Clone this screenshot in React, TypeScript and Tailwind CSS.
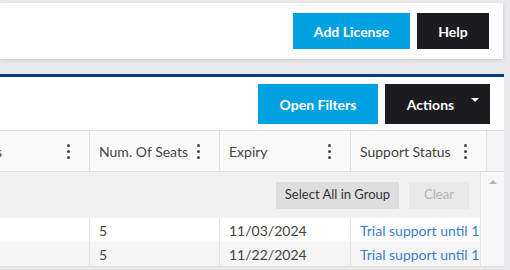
function Kebab() {
  return (
    <span className="flex flex-col items-center gap-[3px]">
      <span className="h-[3px] w-[3px] rounded-full bg-[#444]" />
      <span className="h-[3px] w-[3px] rounded-full bg-[#444]" />
      <span className="h-[3px] w-[3px] rounded-full bg-[#444]" />
    </span>
  );
}

const cols = [
  { label: 'Status', w: 'w-[90px] pl-0', shift: true },
  { label: 'Num. Of Seats', w: 'w-[130px] pl-[9px]' },
  { label: 'Expiry', w: 'w-[131px] pl-[9px]' },
  { label: 'Support Status', w: 'w-[136px] pl-[9px]' },
];

const rows = [
  { seats: '5', expiry: '11/03/2024', support: 'Trial support until 11/03/2024', bg: 'bg-white' },
  { seats: '5', expiry: '11/22/2024', support: 'Trial support until 11/22/2024', bg: 'bg-[#f5f5f5]' },
];

export default function App() {
  return (
    <div className="h-[270px] w-[510px] overflow-hidden bg-[#e8e9eb] pt-[3px] font-['Lato','Liberation_Sans',sans-serif]">
      {/* page header */}
      <div className="flex h-[56px] w-[503px] items-center justify-end gap-[7px] bg-white pr-[14px] shadow-[0_1px_3px_rgba(0,0,0,0.15)]">
        <button className="h-[36px] w-[117px] bg-[#00a1e0] text-[14px] font-bold text-white">Add License</button>
        <button className="h-[36px] w-[72px] bg-[#1c1c1e] text-[14px] font-bold text-white">Help</button>
      </div>

      {/* grid panel */}
      <div className="mt-[15px] w-[504px] border-t-[3px] border-[#003e7e] bg-white">
        <div className="flex h-[54px] items-center justify-end gap-[7px] border-b border-[#dcdcdc] pr-[14px] pt-[1px]">
          <button className="h-[40px] w-[120px] bg-[#00a1e0] text-[14px] font-bold text-white">Open Filters</button>
          <button className="relative h-[40px] w-[105px] bg-[#1c1c1e] pr-[14px] text-[14px] font-bold text-white">
            Actions
            <span className="absolute right-[11px] top-[14px] h-0 w-0 border-x-[4px] border-t-[4px] border-x-transparent border-t-white" />
          </button>
        </div>

        {/* header row */}
        <div className="flex h-[41px] border-b border-[#e0e0e0] bg-[#fafafa] text-[14px] text-[#444]">
          {cols.map((c) => (
            <div key={c.label} className={`${c.w} flex shrink-0 items-center justify-between overflow-hidden border-r border-[#e0e0e0] pr-[19px]`}>
              <span className={`whitespace-nowrap ${c.shift ? 'ml-[-36px]' : ''}`}>{c.label}</span>
              <Kebab />
            </div>
          ))}
          <div className="flex-1 bg-[#f5f5f5]" />
        </div>

        {/* body */}
        <div className="flex border-b border-[#e0e0e0]">
          <div className="w-[481px] shrink-0 overflow-hidden border-r border-[#e3e3e3]">
            <div className="flex h-[46px] items-center justify-end gap-[10px] bg-[#f1f1f1] pr-[11px]">
              <button className="h-[27px] w-[123px] bg-[#dedede] text-[13px] text-[#333]">Select All in Group</button>
              <button className="h-[27px] w-[60px] bg-[#e9e9e9] text-[13px] text-[#b3b3b3]">Clear</button>
            </div>
            {rows.map((r, i) => (
              <div key={i} className={`flex h-[24px] text-[14px] text-[#444] ${r.bg}`}>
                <div className="w-[90px] shrink-0 border-r border-[#e3e3e3]" />
                <div className="flex w-[130px] shrink-0 items-center border-r border-[#e3e3e3] pl-[9px]">{r.seats}</div>
                <div className="flex w-[131px] shrink-0 items-center border-r border-[#e3e3e3] pl-[9px]">{r.expiry}</div>
                <div className="flex shrink-0 items-center whitespace-nowrap pl-[9px] text-[#3a7fc8]">{r.support}</div>
              </div>
            ))}
          </div>
          <div className="flex flex-1 justify-center bg-[#f7f7f7] pt-[8px]">
            <span className="h-0 w-0 border-x-[4px] border-b-[4px] border-x-transparent border-b-[#b5b5b5]" />
          </div>
        </div>
      </div>
    </div>
  );
}
